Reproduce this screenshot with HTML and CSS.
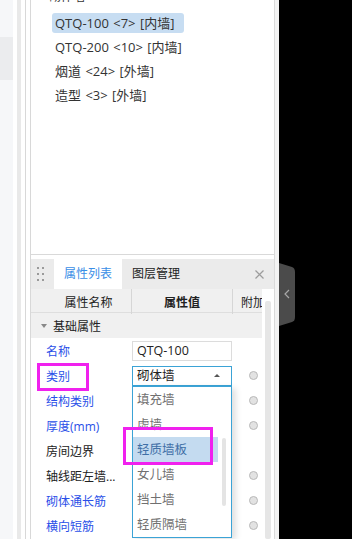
FILE: index.html
```html
<!DOCTYPE html>
<html lang="zh-CN">

<head>
    <meta charset="UTF-8">
    <title>属性列表</title>
    <link rel="stylesheet" href="styles.css">
</head>

<body>
    <div class="page">
        <!-- 左侧窄条 -->
        <div class="rail"><div class="rail-band"></div></div>
        <div class="gutter"></div>
        <div class="track"></div>
        <div class="gutter line"></div>
        <div class="gutter line"></div>

        <div class="main">
            <!-- 构件树 -->
            <div class="tree">
                <div class="tree-group"><span class="caret"></span>砌体墙</div>
                <ul class="tree-list">
                    <li class="tree-item selected">QTQ-100 &lt;7&gt; [内墙]</li>
                    <li class="tree-item">QTQ-200 &lt;10&gt; [内墙]</li>
                    <li class="tree-item">烟道 &lt;24&gt; [外墙]</li>
                    <li class="tree-item">造型 &lt;3&gt; [外墙]</li>
                </ul>
            </div>

            <!-- 属性面板 -->
            <div class="props">
                <div class="tabs">
                    <svg class="handle" width="8" height="14" viewBox="0 0 8 14">
                        <rect x="0" y="0" width="2" height="2" />
                        <rect x="5" y="0" width="2" height="2" />
                        <rect x="0" y="6" width="2" height="2" />
                        <rect x="5" y="6" width="2" height="2" />
                        <rect x="0" y="12" width="2" height="2" />
                        <rect x="5" y="12" width="2" height="2" />
                    </svg>
                    <div class="tab active">属性列表</div>
                    <div class="tab">图层管理</div>
                    <svg class="close" width="9" height="9" viewBox="0 0 9 9">
                        <path d="M0.5 0.5 L8.5 8.5 M8.5 0.5 L0.5 8.5" />
                    </svg>
                </div>

                <div class="props-body">
                    <div class="table">
                        <div class="row head">
                            <div class="cell c1">属性名称</div>
                            <div class="cell c2">属性值</div>
                            <div class="cell c3">附加</div>
                        </div>
                        <div class="row group"><span class="caret"></span>基础属性</div>

                        <div class="row">
                            <div class="cell c1 blue">名称</div>
                            <div class="cell c2"><div class="input">QTQ-100</div></div>
                            <div class="cell c3"></div>
                        </div>
                        <div class="row">
                            <div class="cell c1 blue">类别</div>
                            <div class="cell c2">
                                <div class="select">
                                    砌体墙<span class="arrow"></span>
                                    <ul class="options">
                                        <li>填充墙</li>
                                        <li>虚墙</li>
                                        <li class="hover">轻质墙板</li>
                                        <li>女儿墙</li>
                                        <li>挡土墙</li>
                                        <li>轻质隔墙</li>
                                    </ul>
                                    <div class="opt-scroll"></div>
                                </div>
                            </div>
                            <div class="cell c3"><span class="radio"></span></div>
                        </div>
                        <div class="row">
                            <div class="cell c1 blue">结构类别</div>
                            <div class="cell c2"></div>
                            <div class="cell c3"><span class="radio"></span></div>
                        </div>
                        <div class="row">
                            <div class="cell c1 blue">厚度(mm)</div>
                            <div class="cell c2"></div>
                            <div class="cell c3"><span class="radio"></span></div>
                        </div>
                        <div class="row">
                            <div class="cell c1">房间边界</div>
                            <div class="cell c2"></div>
                            <div class="cell c3"></div>
                        </div>
                        <div class="row">
                            <div class="cell c1">轴线距左墙...</div>
                            <div class="cell c2"></div>
                            <div class="cell c3"><span class="radio"></span></div>
                        </div>
                        <div class="row">
                            <div class="cell c1 blue">砌体通长筋</div>
                            <div class="cell c2"></div>
                            <div class="cell c3"><span class="radio"></span></div>
                        </div>
                        <div class="row">
                            <div class="cell c1 blue">横向短筋</div>
                            <div class="cell c2"></div>
                            <div class="cell c3"><span class="radio"></span></div>
                        </div>
                    </div>
                    <div class="vscroll"><div class="thumb"></div></div>
                </div>

                <!-- 标注框 -->
                <div class="mark mark-label"></div>
                <div class="mark mark-option"></div>
            </div>
        </div>

        <div class="edge"></div>
        <div class="dark">
            <svg class="collapse" width="17" height="63" viewBox="0 0 17 63">
                <path class="collapse-bg" d="M0 0 L13 4 Q16 5 16 9 L16 54 Q16 58 13 59 L0 63 Z" />
                <path class="collapse-arrow" d="M10 27 L6 31 L10 35" />
            </svg>
        </div>
    </div>
</body>

</html>
```

FILE: styles.css
```css
* {
    margin: 0;
    padding: 0;
    box-sizing: border-box;
}

body {
    font-family: "Open Sans", "Noto Sans CJK SC", sans-serif;
    font-size: 12px;
    color: #333;
    background-color: #fff;
}

.page {
    width: 352px;
    height: 539px;
    display: flex;
    overflow: hidden;
}

/* 左侧窄条 */
.rail {
    width: 13px;
    background-color: #f6f7f9;
    padding-top: 37px;
}

.rail-band {
    height: 43px;
    background-color: #ebecee;
}

.gutter {
    width: 4px;
}

.gutter.line {
    width: 5px;
    border-right: 1px solid #d8d8d8;
}

.track {
    width: 4px;
    background-color: #e9e9e9;
}

.main {
    width: 244px;
    border-right: 1px solid #dadada;
    display: flex;
    flex-direction: column;
}

/* 构件树 */
.tree {
    height: 255px;
    border-bottom: 1px solid #d9d9d9;
    overflow: hidden;
    padding-left: 7px;
}

.tree-group {
    height: 24px;
    line-height: 24px;
    margin-top: -15px;
    font-size: 12px;
    color: #333;
    display: flex;
    align-items: center;
}

.caret {
    width: 0;
    height: 0;
    border-left: 3px solid transparent;
    border-right: 3px solid transparent;
    border-top: 4px solid #888;
    margin-right: 5px;
}

.tree-list {
    list-style: none;
}

.tree-item {
    width: 132px;
    height: 20px;
    line-height: 20px;
    margin: 4px 0 0 14px;
    padding-left: 3px;
    font-size: 13px;
    word-spacing: 1px;
    color: #333;
    white-space: nowrap;
}

.tree-item.selected {
    background-color: #c7ddf2;
    border-radius: 3px;
}

/* 属性面板 */
.props {
    flex: 1;
    margin-top: 4px;
    position: relative;
    display: flex;
    flex-direction: column;
}

.tabs {
    height: 30px;
    background-color: #ebebeb;
    display: flex;
    align-items: stretch;
    padding-left: 6px;
}

.handle {
    align-self: center;
    fill: #9a9a9a;
    margin-right: 9px;
}

.tab {
    line-height: 30px;
    padding: 0 10px;
    color: #222;
}

.tab.active {
    background-color: #fff;
    color: #3a8ee6;
}

.close {
    align-self: center;
    margin-left: auto;
    margin-right: 10px;
    stroke: #9c9c9c;
    stroke-width: 1.2;
}

.props-body {
    flex: 1;
    display: flex;
}

.table {
    width: 231px;
}

.row {
    height: 25px;
    display: grid;
    grid-template-columns: 101px 101px 29px;
    align-items: center;
}

.row.head {
    height: 24px;
    background-color: #f0f0f0;
    border-bottom: 1px solid #dedede;
    align-items: stretch;
}

.row.head .cell {
    display: flex;
    align-items: center;
    justify-content: center;
    color: #222;
}

.row.head .c1,
.row.head .c2 {
    border-right: 1px solid #d6d6d6;
}

.row.head .c2 {
    font-weight: bold;
}

.row.head .c3 {
    justify-content: flex-start;
    padding-left: 8px;
    overflow: hidden;
    white-space: nowrap;
}

.row.group {
    display: flex;
    background-color: #f0f0f0;
    padding-left: 10px;
    color: #222;
}

.row.group .caret {
    margin-right: 6px;
}

.c1 {
    padding-left: 15px;
    color: #222;
    white-space: nowrap;
}

.c1.blue {
    color: #2a4fe8;
}

.c2 {
    height: 25px;
    display: flex;
    align-items: center;
}

.c3 {
    padding-left: 16px;
    display: flex;
    align-items: center;
}

.input,
.select {
    width: 100px;
    height: 20px;
    line-height: 18px;
    padding-left: 4px;
    border: 1px solid #dcdcdc;
    color: #222;
    font-size: 12.5px;
}

.select {
    position: relative;
    border-color: #3ba3d6;
}

.arrow {
    position: absolute;
    right: 11px;
    top: 7px;
    width: 0;
    height: 0;
    border-left: 3px solid transparent;
    border-right: 3px solid transparent;
    border-bottom: 3px solid #555;
}

/* 下拉列表 */
.options {
    position: absolute;
    left: -1px;
    top: 19px;
    width: 100px;
    height: 152px;
    list-style: none;
    background-color: #fff;
    border: 1px solid #3ba3d6;
    box-shadow: 4px 2px 6px rgba(0, 0, 0, 0.12);
    z-index: 10;
}

.options li {
    width: 85px;
    height: 25px;
    line-height: 25px;
    padding-left: 4px;
    color: #707070;
}

.options li.hover {
    background-color: #c4dbf0;
    color: #3f6fa6;
}

.opt-scroll {
    position: absolute;
    left: 89px;
    top: 71px;
    width: 4px;
    height: 68px;
    border-radius: 2px;
    background-color: #e4e4e4;
    z-index: 11;
}

.radio {
    width: 9px;
    height: 9px;
    border-radius: 50%;
    background-color: #e2e2e2;
    border: 1px solid #b9b9b9;
}

.vscroll {
    width: 12px;
    padding: 12px 0 0 3px;
}

.thumb {
    width: 6px;
    height: 100%;
    background-color: #e6e6e6;
    border-radius: 2px;
}

/* 标注框 */
.mark {
    position: absolute;
    border: 3px solid #f021ee;
    z-index: 20;
}

.mark-label {
    left: 6px;
    top: 104px;
    width: 52px;
    height: 28px;
}

.mark-option {
    left: 92px;
    top: 168px;
    width: 90px;
    height: 38px;
}

.edge {
    width: 4px;
    background-color: #f3f3f3;
}

.dark {
    flex: 1;
    background-color: #000;
    position: relative;
}

.collapse {
    position: absolute;
    left: 0;
    top: 263px;
}

.collapse-bg {
    fill: #4b4b4b;
}

.collapse-arrow {
    fill: none;
    stroke: #a8a8a8;
    stroke-width: 1.2;
}
```
